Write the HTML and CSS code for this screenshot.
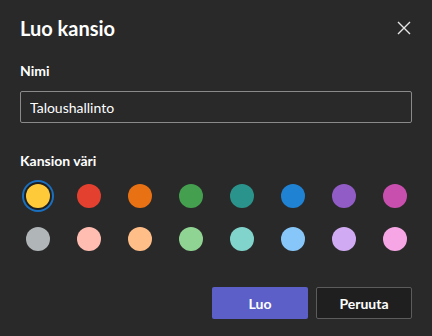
FILE: index.html
```html
<!DOCTYPE html>
<html lang="fi">
<head>
    <meta charset="UTF-8">
    <meta name="viewport" content="width=device-width, initial-scale=1.0">
    <title>Luo kansio</title>
    <link rel="stylesheet" href="styles.css">
</head>
<body>
    <div class="dialog">
        <div class="dialog-header">
            <h1>Luo kansio</h1>
            <button class="close" aria-label="Sulje">
                <svg width="14" height="14" viewBox="0 0 14 14">
                    <path d="M1 1 L13 13 M13 1 L1 13" stroke="#e6e6e6" stroke-width="1.4" fill="none"/>
                </svg>
            </button>
        </div>

        <label class="field-label" for="name">Nimi</label>
        <input id="name" class="text-input" type="text" value="Taloushallinto">

        <div class="field-label color-label">Kansion väri</div>
        <div class="swatches">
            <span class="swatch selected"><span class="dot" style="background:#ffca3a"></span></span>
            <span class="swatch"><span class="dot" style="background:#e4402f"></span></span>
            <span class="swatch"><span class="dot" style="background:#e87114"></span></span>
            <span class="swatch"><span class="dot" style="background:#44a04f"></span></span>
            <span class="swatch"><span class="dot" style="background:#2a948c"></span></span>
            <span class="swatch"><span class="dot" style="background:#1f82d3"></span></span>
            <span class="swatch"><span class="dot" style="background:#915cc6"></span></span>
            <span class="swatch"><span class="dot" style="background:#c94fae"></span></span>

            <span class="swatch"><span class="dot" style="background:#b0b5b8"></span></span>
            <span class="swatch"><span class="dot" style="background:#ffbcb1"></span></span>
            <span class="swatch"><span class="dot" style="background:#ffbe88"></span></span>
            <span class="swatch"><span class="dot" style="background:#90d494"></span></span>
            <span class="swatch"><span class="dot" style="background:#80d4cb"></span></span>
            <span class="swatch"><span class="dot" style="background:#86c6f8"></span></span>
            <span class="swatch"><span class="dot" style="background:#d0aaf2"></span></span>
            <span class="swatch"><span class="dot" style="background:#f6a6e4"></span></span>
        </div>

        <div class="actions">
            <button class="btn primary">Luo</button>
            <button class="btn secondary">Peruuta</button>
        </div>
    </div>
</body>
</html>
```

FILE: styles.css
```css
* {
    margin: 0;
    padding: 0;
    box-sizing: border-box;
    font-family: 'Segoe UI', Lato, sans-serif;
}

body {
    background: #292929;
    color: #fff;
    width: 432px;
    height: 336px;
    overflow: hidden;
}

.dialog {
    padding: 13px 20px 0 20px;
}

.dialog-header {
    display: flex;
    justify-content: space-between;
    align-items: center;
    height: 30px;
}

.dialog-header h1 {
    font-size: 20px;
    font-weight: 700;
    line-height: 30px;
    color: #fff;
}

.close {
    background: none;
    border: none;
    width: 20px;
    height: 20px;
    display: flex;
    align-items: center;
    justify-content: center;
    margin-right: -2px;
}

.field-label {
    display: block;
    font-size: 14px;
    font-weight: 700;
    line-height: 20px;
    margin-top: 18px;
    color: #fff;
}

.text-input {
    display: block;
    width: 100%;
    height: 32px;
    margin-top: 10px;
    padding: 0 9px;
    background: #292929;
    border: 1px solid #8a8a8a;
    border-radius: 2px;
    color: #fff;
    font-size: 14px;
    outline: none;
}

.color-label {
    margin-top: 28px;
}

.swatches {
    display: grid;
    grid-template-columns: repeat(8, 36px);
    column-gap: 15px;
    row-gap: 11px;
    margin-top: 9px;
}

.swatch {
    width: 36px;
    height: 32px;
    display: flex;
    align-items: center;
    justify-content: center;
}

.dot {
    width: 24px;
    height: 24px;
    border-radius: 50%;
}

.swatch.selected .dot {
    box-shadow: 0 0 0 2px #1f1f1f, 0 0 0 4px #1a6fbf;
}

.actions {
    display: flex;
    justify-content: flex-end;
    gap: 8px;
    margin-top: 32px;
}

.btn {
    width: 96px;
    height: 32px;
    border-radius: 2px;
    font-size: 14px;
    font-weight: 700;
    color: #fff;
}

.primary {
    background: #5b5fc7;
    border: none;
}

.secondary {
    background: #1f1f1f;
    border: 1px solid #5c5c5c;
}
```
